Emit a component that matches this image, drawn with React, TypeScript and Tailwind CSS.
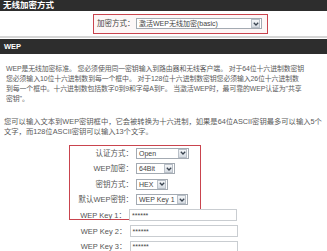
import React from 'react';

const font = "font-['Liberation_Sans','Noto_Sans_CJK_SC',sans-serif]";

function Arrow() {
  return (
    <span className="flex h-[9px] w-[9px] shrink-0 items-center justify-center border border-[#b9c0c8] bg-gradient-to-b from-[#f4f6f8] to-[#d5dbe2] mr-[1px]">
      <svg width="6" height="4" viewBox="0 0 6 4">
        <path d="M0.8 0.8 L3 3 L5.2 0.8" fill="none" stroke="#3a4450" strokeWidth="1.3" />
      </svg>
    </span>
  );
}

function Sel({ w, text }: { w: string; text: string }) {
  return (
    <div className={`flex h-[11px] items-center border border-[#a3aab2] bg-white ${w}`}>
      <span className="flex-1 whitespace-nowrap pl-[2px] text-[7px] leading-none text-[#444]">{text}</span>
      <Arrow />
    </div>
  );
}

function Row({ label, children, lw = 'w-[64px]' }: { label: string; children: React.ReactNode; lw?: string }) {
  return (
    <div className="flex h-[15.5px] items-center">
      <span className={`${lw} shrink-0 whitespace-nowrap pr-[1px] text-right text-[7.5px] leading-none text-[#555]`}>{label}</span>
      {children}
    </div>
  );
}

function KeyInput() {
  return (
    <div className="ml-[2px] flex h-[12px] w-[108px] shrink-0 items-center border border-[#c9cdd1] bg-white pl-[2px] text-[7px] leading-none text-[#444]">
      ******
    </div>
  );
}

export default function App() {
  return (
    <div className={`h-[251px] w-[327px] overflow-hidden bg-white ${font}`}>
      <div className="h-[11px] bg-[#2d2d2d] pl-[3px] text-[8.5px] font-bold leading-[11px] text-white">无线加密方式</div>

      <div className="flex h-[27px] items-center border-b-2 border-[#d6d6d6]">
        <div className="ml-[93px] flex h-[20px] w-[175px] items-center border-[1.5px] border-[#c9444e] bg-[#fdf7f7]">
          <span className="w-[42px] shrink-0 pl-[3px] text-[7.5px] leading-none text-[#444]">加密方式：</span>
          <Sel w="w-[126px]" text="激活WEP无线加密(basic)" />
        </div>
      </div>

      <div className="mt-[1px] h-[15px] bg-[#2d2d2d] pl-[4px] text-[7.5px] font-bold leading-[15px] text-white">WEP</div>

      <div className="whitespace-nowrap pl-[6px] pt-[10px] text-[6.9px] tracking-[-0.1px] leading-[10px] text-[#5a5a5a]">
        <div>WEP是无线加密标准。 您必须使用同一密钥输入到路由器和无线客户端。 对于64位十六进制数密钥</div>
        <div>您必须输入10位十六进制数到每一个框中。 对于128位十六进制数密钥您必须输入26位十六进制数</div>
        <div>到每一个框中。十六进制数包括数字0到9和字母A到F。 当激活WEP时，最可靠的WEP认证为"共享</div>
        <div>密钥"。</div>
      </div>

      <div className="mt-[13px] whitespace-nowrap pl-[4px] text-[7.3px] leading-[10px] text-[#5a5a5a]">
        <div>您可以输入文本到WEP密钥框中，它会被转换为十六进制，如果是64位ASCII密钥最多可以输入5个</div>
        <div>文字，而128位ASCII密钥可以输入13个文字。</div>
      </div>

      <div className="ml-[69px] mt-[8px]">
        <div className="h-[75px] w-[132px] border-[1.5px] border-[#c9444e]">
          <div className="-mt-[0.5px]">
            <Row label="认证方式：">
              <Sel w="ml-[2px] w-[53px]" text="Open" />
            </Row>
            <Row label="WEP加密：">
              <Sel w="ml-[2px] w-[39px]" text="64Bit" />
            </Row>
            <Row label="密钥方式：">
              <Sel w="ml-[2px] w-[32px]" text="HEX" />
            </Row>
            <Row label="默认WEP密钥：">
              <Sel w="ml-[2px] w-[52px]" text="WEP Key 1" />
            </Row>
            <Row label="WEP Key 1：" lw="w-[57px]">
              <KeyInput />
            </Row>
          </div>
        </div>
        <div className="mt-[3.5px] pl-[1.5px]">
          <Row label="WEP Key 2：" lw="w-[57px]">
            <KeyInput />
          </Row>
          <Row label="WEP Key 3：" lw="w-[57px]">
            <KeyInput />
          </Row>
        </div>
      </div>
    </div>
  );
}
